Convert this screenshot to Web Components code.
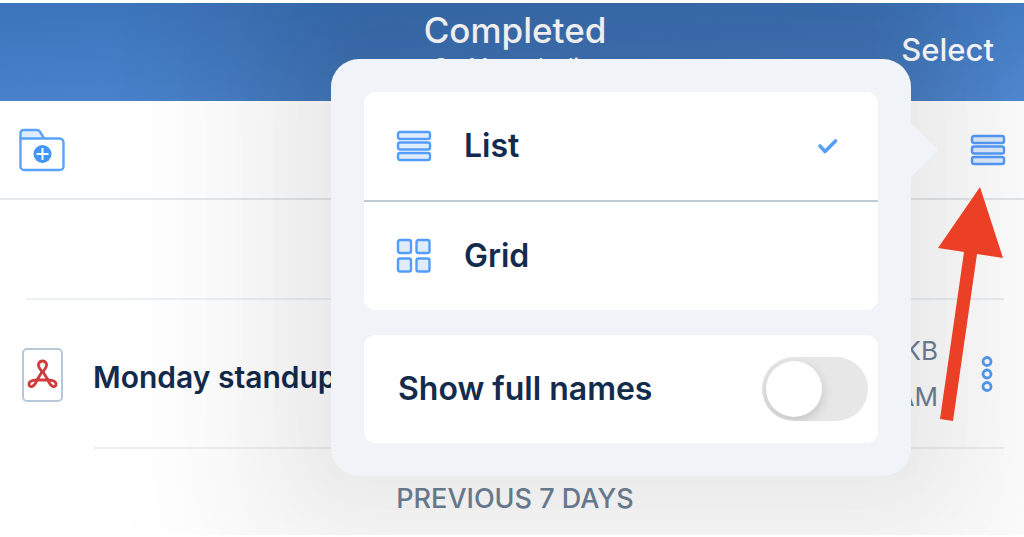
<!DOCTYPE html>
<html lang="en">
<head>
<meta charset="utf-8">
<meta name="viewport" content="width=device-width, initial-scale=1">
<title>Completed</title>
<style>
  body {
    margin: 0;
    background: #fff;
    color: #132b4c;
    font-family: Inter, "Liberation Sans", sans-serif;
  }
</style>
</head>
<body>
<file-browser>
  <nav-header slot="header" title-text="Completed" subtitle-text="On My tasks list"></nav-header>
  <file-toolbar slot="toolbar">
    <view-popover>
      <popover-group>
        <view-option icon="list" selected>List</view-option>
        <view-option icon="grid">Grid</view-option>
      </popover-group>
      <popover-group>
        <toggle-row label="Show full names"></toggle-row>
      </popover-group>
    </view-popover>
  </file-toolbar>
  <file-row name="Monday standup notes" size="84 KB" time="9:41 AM"></file-row>
  <section-title>Previous 7 days</section-title>
</file-browser>

<script>
const icons = {
  list: `<svg width="36" height="32" viewBox="0 0 36 32" fill="#dfecfc" stroke="#549cfa" stroke-width="2.4">
    <rect x="2" y="2" width="32" height="7" rx="2"/>
    <rect x="2" y="12.500" width="32" height="7" rx="2"/>
    <rect x="2" y="23" width="32" height="7" rx="2"/>
  </svg>`,
  grid: `<svg width="36" height="36" viewBox="0 0 36 36" fill="#dfecfc" stroke="#549cfa" stroke-width="2.4">
    <rect x="2" y="2" width="13" height="13" rx="2"/>
    <rect x="20.500" y="2" width="13" height="13" rx="2"/>
    <rect x="2" y="20.500" width="13" height="13" rx="2"/>
    <rect x="20.500" y="20.500" width="13" height="13" rx="2"/>
  </svg>`,
  folder: `<svg width="48" height="44" viewBox="0 0 48 44" fill="none" stroke="#5aa2fb" stroke-width="2.400">
    <path d="M2.500 11V5a3 3 0 0 1 3-3h13q2 0 3 1l5 8" fill="#dfecfc"/>
    <path d="M2.500 10.500h39a4 4 0 0 1 4 4v24a3.500 3.500 0 0 1-3.500 3.500H6a3.500 3.500 0 0 1-3.500-3.500z" fill="#fff"/>
    <circle cx="24.500" cy="26" r="9" fill="#4294f7" stroke="none"/>
    <path d="M18.500 26h12M24.500 20v12" stroke="#fff" stroke-width="2"/>
  </svg>`,
  check: `<svg width="20" height="16" viewBox="0 0 20 16" fill="none" stroke="#549ffb" stroke-width="3.600" stroke-linecap="round" stroke-linejoin="round">
    <path d="M2 8l5 5.500L17.500 3"/>
  </svg>`,
  pdf: `<svg width="42" height="54" viewBox="0 0 42 54" fill="none">
    <rect x="1" y="1" width="39" height="52" rx="4" fill="#fff" stroke="#b9c8d8" stroke-width="2"/>
    <g stroke="#cf3d3a" stroke-width="2.800" stroke-linejoin="round">
      <path d="M20.500 24C16.500 19.500 16 17.500 16.500 16C18 12 23 12 24.500 16C25 17.500 24.500 19.500 20.500 24Z"/>
      <path d="M20.500 23L15 32M20.500 23L26 32M14 32H27"/>
      <path d="M15 32C9 32 6.500 34 7 37C8.500 40 12.500 39 15 32Z"/>
      <path d="M26 32C32 32 34.500 34 34 37C32.500 40 28.500 39 26 32Z"/>
    </g>
  </svg>`,
  more: `<svg width="12" height="38" viewBox="0 0 12 38" fill="none" stroke="#549cf0" stroke-width="2.800">
    <circle cx="6" cy="6.500" r="4"/><circle cx="6" cy="19" r="4"/><circle cx="6" cy="31.500" r="4"/>
  </svg>`
};

class FileBrowser extends HTMLElement {
  constructor() {
    super();

    this.attachShadow({mode: 'open'}).innerHTML = `
      <style>
        :host {
          position: relative;
          display: block;
          margin: 3px 0 1px;
          overflow: hidden;
          background: #fff;
        }
        .spacer {
          height: 98px;
          margin: 0 20px 0 26px;
          border-bottom: 2px solid #eef1f3;
        }
      </style>
      <slot name="header"></slot>
      <main>
        <slot name="toolbar"></slot>
        <div class="spacer"></div>
        <slot></slot>
      </main>
    `;
  }
}
customElements.define('file-browser', FileBrowser);

class NavHeader extends HTMLElement {
  constructor() {
    super();

    this.attachShadow({mode: 'open'}).innerHTML = `
      <style>
        :host {
          display: grid;
          grid-template-columns: 1fr auto 1fr;
          height: 98px;
          box-sizing: border-box;
          padding: 7px 30px 0 36px;
          overflow: hidden;
          background:
            linear-gradient(90deg, transparent 10%, rgba(20, 50, 80, .16) 36%, rgba(20, 50, 80, .16) 85%, transparent),
            linear-gradient(176deg, #3c74bb, #528bd6);
          color: #fff;
        }
        .titles {
          grid-column: 2;
          text-align: center;
        }
        h1 {
          margin: 0;
          font-size: 35px;
          line-height: 40px;
          font-weight: 500;
        }
        p {
          margin: 0;
          font-size: 22px;
          line-height: 32px;
        }
        button {
          justify-self: end;
          align-self: start;
          margin-top: 20px;
          padding: 0;
          border: 0;
          background: none;
          color: inherit;
          font: 500 31px/40px Inter, sans-serif;
        }
      </style>
      <div class="titles">
        <h1>${this.getAttribute('title-text')}</h1>
        <p>${this.getAttribute('subtitle-text')}</p>
      </div>
      <button type="button">Select</button>
    `;
  }
}
customElements.define('nav-header', NavHeader);

class FileToolbar extends HTMLElement {
  constructor() {
    super();

    this.attachShadow({mode: 'open'}).innerHTML = `
      <style>
        :host {
          position: relative;
          display: flex;
          justify-content: space-between;
          align-items: center;
          height: 97px;
          padding: 0 18px;
          border-bottom: 2px solid #e6e9eb;
        }
        button {
          display: flex;
          padding: 0;
          border: 0;
          background: none;
        }
        .pointer {
          position: absolute;
          z-index: 2;
          top: 86px;
          right: 18px;
        }
      </style>
      <button type="button" aria-label="New folder">${icons.folder}</button>
      <button type="button" aria-label="View options">${icons.list}</button>
      <slot></slot>
      <svg class="pointer" width="70" height="236" viewBox="0 0 70 236" fill="#eb4026">
        <path d="M44 0L67 71L41 67L17 234L4 232L28 65L2 61Z"/>
      </svg>
    `;
  }
}
customElements.define('file-toolbar', FileToolbar);

class ViewPopover extends HTMLElement {
  constructor() {
    super();

    this.attachShadow({mode: 'open'}).innerHTML = `
      <style>
        :host {
          position: absolute;
          z-index: 1;
          top: -42px;
          right: 113px;
          width: 580px;
          box-sizing: border-box;
          display: grid;
          gap: 25px;
          padding: 33px;
          border-radius: 28px;
          background: #f0f4f8;
          box-shadow:
            0 0 80px 40px rgba(0, 0, 0, .035),
            0 0 100px 90px rgba(0, 0, 0, .03),
            0 0 120px 150px rgba(0, 0, 0, .025);
        }
        .tip {
          position: absolute;
          top: 62px;
          right: -28px;
        }
      </style>
      <slot></slot>
      <svg class="tip" width="30" height="58" viewBox="0 0 30 58" fill="#f0f4f8">
        <path d="M0 0L27 26Q30 29 27 32L0 58Z"/>
      </svg>
    `;
  }
}
customElements.define('view-popover', ViewPopover);

class PopoverGroup extends HTMLElement {
  constructor() {
    super();

    this.attachShadow({mode: 'open'}).innerHTML = `
      <style>
        :host {
          display: block;
          border-radius: 12px;
          background: #fff;
          overflow: hidden;
        }
        ::slotted(:not(:first-child)) {
          border-top: 2px solid #bccbd6;
        }
      </style>
      <slot></slot>
    `;
  }
}
customElements.define('popover-group', PopoverGroup);

class ViewOption extends HTMLElement {
  constructor() {
    super();

    const selected = this.hasAttribute('selected');
    this.attachShadow({mode: 'open'}).innerHTML = `
      <style>
        :host {
          display: block;
        }
        button {
          display: flex;
          align-items: center;
          gap: 32px;
          width: 100%;
          height: 108px;
          padding: 0 40px 0 32px;
          border: 0;
          background: none;
          color: inherit;
          font: 600 32px/40px Inter, sans-serif;
          text-align: left;
        }
        span {
          flex: 1;
        }
      </style>
      <button type="button" aria-pressed="${selected}">
        ${icons[this.getAttribute('icon')]}
        <span><slot></slot></span>
        ${selected ? icons.check : ''}
      </button>
    `;
  }
}
customElements.define('view-option', ViewOption);

class ToggleRow extends HTMLElement {
  constructor() {
    super();

    this.attachShadow({mode: 'open'}).innerHTML = `
      <style>
        :host {
          display: flex;
          justify-content: space-between;
          align-items: center;
          height: 108px;
          padding: 0 10px 0 34px;
        }
        label {
          font-size: 32px;
          line-height: 40px;
          font-weight: 600;
        }
        input {
          appearance: none;
          width: 106px;
          height: 64px;
          margin: 0;
          padding: 4px;
          box-sizing: border-box;
          border-radius: 32px;
          background: #e7e7e8;
          overflow: hidden;
        }
        input::before {
          content: "";
          display: block;
          width: 56px;
          height: 56px;
          border-radius: 50%;
          background: #fff;
          box-shadow: 0 4px 12px rgba(0, 0, 0, .16);
        }
        input:checked {
          background: #549cfa;
        }
        input:checked::before {
          margin-left: auto;
        }
      </style>
      <label for="toggle">${this.getAttribute('label')}</label>
      <input id="toggle" type="checkbox" role="switch">
    `;
  }
}
customElements.define('toggle-row', ToggleRow);

class FileRow extends HTMLElement {
  constructor() {
    super();

    this.attachShadow({mode: 'open'}).innerHTML = `
      <style>
        :host {
          display: flex;
          align-items: center;
          gap: 29px;
          padding-left: 22px;
        }
        .body {
          flex: 1;
          display: flex;
          align-items: center;
          height: 147px;
          margin-right: 20px;
          padding-right: 11px;
          border-bottom: 2px solid #eef1f3;
        }
        .name {
          flex: 1;
          padding-top: 6px;
          font-size: 30px;
          line-height: 40px;
          font-weight: 600;
        }
        .meta {
          margin-right: 43px;
          color: #6d8197;
          font-size: 26px;
          line-height: 46px;
          text-align: right;
        }
        button {
          display: flex;
          padding: 0;
          border: 0;
          background: none;
        }
      </style>
      ${icons.pdf}
      <div class="body">
        <div class="name">${this.getAttribute('name')}</div>
        <div class="meta">
          <div>${this.getAttribute('size')}</div>
          <div>${this.getAttribute('time')}</div>
        </div>
        <button type="button" aria-label="More">${icons.more}</button>
      </div>
    `;
  }
}
customElements.define('file-row', FileRow);

class SectionTitle extends HTMLElement {
  constructor() {
    super();

    this.attachShadow({mode: 'open'}).innerHTML = `
      <style>
        :host {
          display: block;
          padding: 34px 0 20px 6px;
        }
        h2 {
          margin: 0;
          color: #6d8197;
          font-size: 27px;
          line-height: 32px;
          font-weight: 500;
          text-align: center;
          text-transform: uppercase;
        }
      </style>
      <h2><slot></slot></h2>
    `;
  }
}
customElements.define('section-title', SectionTitle);
</script>
</body>
</html>
